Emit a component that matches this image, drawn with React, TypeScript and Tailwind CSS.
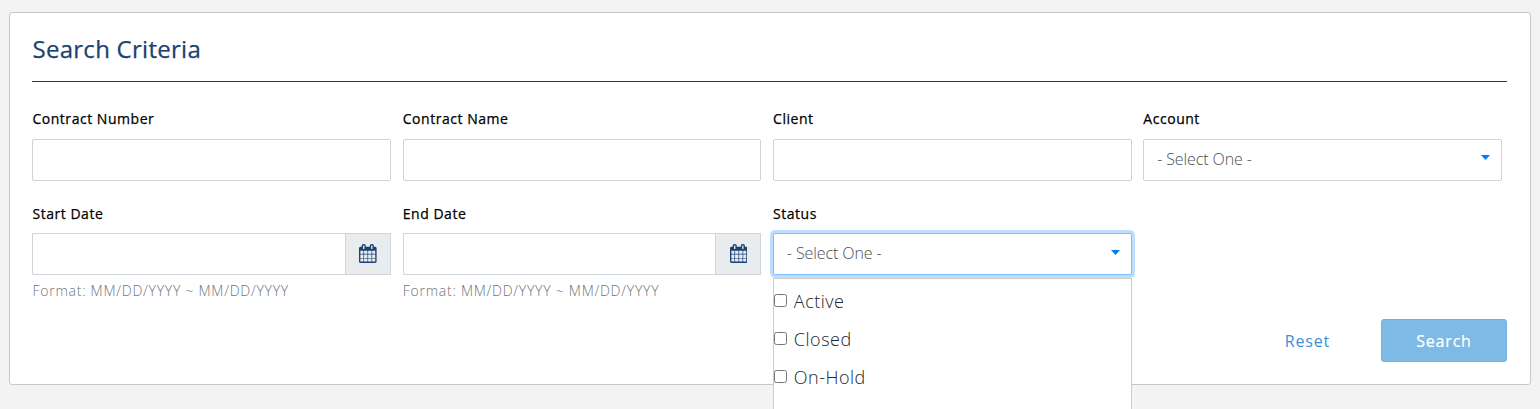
import type { ReactNode } from 'react';

function CalendarIcon() {
  return (
    <svg viewBox="0 0 1664 1792" className="mb-[2px] h-[19px] w-[17.6px]" fill="#1b4272">
      <path d="M128 1664h288v-288h-288v288zm352 0h320v-288h-320v288zm-352-352h288v-320h-288v320zm352 0h320v-320h-320v320zm-352-384h288v-288h-288v288zm736 736h320v-288h-320v288zm-384-736h320v-288h-320v288zm768 736h288v-288h-288v288zm-384-352h320v-320h-320v320zm-352-864v-288q0-13-9.5-22.5t-22.5-9.5h-64q-13 0-22.5 9.5t-9.5 22.5v288q0 13 9.5 22.5t22.5 9.5h64q13 0 22.5-9.5t9.5-22.5zm736 864h288v-320h-288v320zm-384-384h320v-288h-320v288zm384 0h288v-288h-288v288zm32-480v-288q0-13-9.5-22.5t-22.5-9.5h-64q-13 0-22.5 9.5t-9.5 22.5v288q0 13 9.5 22.5t22.5 9.5h64q13 0 22.5-9.5t9.5-22.5zm384-64v1280q0 52-38 90t-90 38h-1408q-52 0-90-38t-38-90v-1280q0-52 38-90t90-38h128v-96q0-66 47-113t113-47h64q66 0 113 47t47 113v96h384v-96q0-66 47-113t113-47h64q66 0 113 47t47 113v96h128q52 0 90 38t38 90z" />
    </svg>
  );
}

function Field({ label, lower = false, children }: { label: string; lower?: boolean; children: ReactNode }) {
  return (
    <div className="relative min-w-0">
      <div
        className={
          lower
            ? 'h-[29px] pt-px pl-[0.2px] text-[14px] leading-[18px] font-medium tracking-[0.53px] text-black [-webkit-text-stroke:0.25px_#000]'
            : 'h-[29px] pl-[0.2px] text-[14px] leading-[18px] font-medium tracking-[0.53px] text-black [-webkit-text-stroke:0.25px_#000]'
        }
      >
        {label}
      </div>
      {children}
    </div>
  );
}

function TextInput() {
  return <input className="block h-[42px] w-full rounded-xs border border-[#ced4da] bg-white px-3.5 outline-none" />;
}

function DateInput() {
  return (
    <>
      <div className="flex h-[42px]">
        <input className="block h-full min-w-0 flex-1 rounded-l-xs border border-r-0 border-[#ced4da] bg-white px-3.5 outline-none" />
        <button className="flex h-full w-[46px] items-center justify-center border border-[#ced4da] bg-[#e9ecef]">
          <CalendarIcon />
        </button>
      </div>
      <div className="mt-[7px] pl-[0.3px] text-[14px] leading-[18px] font-light tracking-[0.74px] text-[#6c757d]">
        Format: MM/DD/YYYY ~ MM/DD/YYYY
      </div>
    </>
  );
}

function Select({ focused = false }: { focused?: boolean }) {
  return (
    <button
      className={
        focused
          ? 'flex h-[42px] w-full items-center justify-between rounded-xs border border-[#80bdff] bg-white pr-[11px] pl-[13px] shadow-[0_0_0_3px_#bfdeff]'
          : 'flex h-[42px] w-full items-center justify-between rounded-xs border border-[#ced4da] bg-white pr-[11px] pl-[13px]'
      }
    >
      <span className="mb-[2px] text-base leading-5 font-light tracking-[-0.1px] text-[#495057]">- Select One -</span>
      <svg viewBox="0 0 9 5" className={focused ? 'mb-[4px] h-[5px] w-[9px]' : 'mb-[6px] h-[5px] w-[9px]'} fill="#007bff">
        <path d="M0 0h9L4.5 5z" />
      </svg>
    </button>
  );
}

function Option({ children }: { children: ReactNode }) {
  return (
    <label className="flex h-[38px] items-center gap-[7px] text-[18px] leading-6 font-light tracking-[0.5px] text-[#212529]">
      <span className="mb-[3px] h-[13px] w-[13px] rounded-[2.5px] border border-[#767676] bg-white" />
      <span className="mb-[2px]">{children}</span>
    </label>
  );
}

export default function App() {
  return (
    <div className="h-[409px] overflow-hidden bg-[#f3f3f3] px-[9px] pt-3 font-['Open_Sans',sans-serif]">
      <section className="flex h-[373px] w-[1522px] flex-col rounded-[3px] border border-[#c8c8c8] bg-white pr-[23px] pl-[22px]">
        <h1 className="h-[69px] border-b border-[#12426b] pt-[21px] pl-[0.5px] text-2xl leading-[30px] font-medium tracking-[0.27px] text-[#1b4272] [-webkit-text-stroke:0.25px_#1b4272]">
          Search Criteria
        </h1>
        <div className="mt-[28px] ml-[0.25px] grid w-[1469.7px] grid-cols-4 gap-x-[11.5px] gap-y-[23px]">
          <Field label="Contract Number"><TextInput /></Field>
          <Field label="Contract Name"><TextInput /></Field>
          <Field label="Client"><TextInput /></Field>
          <Field label="Account"><Select /></Field>
          <Field label="Start Date" lower><DateInput /></Field>
          <Field label="End Date" lower><DateInput /></Field>
          <Field label="Status" lower>
            <Select focused />
            <div className="absolute top-[74px] left-0 z-10 h-[170px] w-full border border-[#cccccc] bg-white pt-[4px]">
              <Option>Active</Option>
              <Option>Closed</Option>
              <Option>On-Hold</Option>
            </div>
          </Field>
        </div>
        <div className="mt-[19px] flex items-center justify-end gap-[51px] text-base tracking-[0.8px]">
          <button className="text-[#3c8fd6]">Reset</button>
          <button className="h-[43px] w-[126px] rounded-[3px] border border-[#71b2e0] bg-[#7dbae6] font-medium text-white [-webkit-text-stroke:0.2px_#fff]">Search</button>
        </div>
      </section>
    </div>
  );
}
